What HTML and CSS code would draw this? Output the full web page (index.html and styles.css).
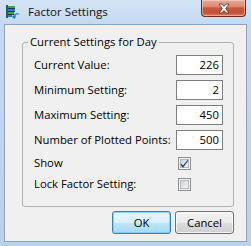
FILE: index.html
```html
<!DOCTYPE html>
<html>
<head>
<meta charset="utf-8">
<link rel="stylesheet" href="styles.css">
</head>
<body>
<div class="window">
  <div class="titlebar">
    <svg class="app-icon" width="16" height="16" viewBox="0 0 16 16">
      <rect x="1" y="1" width="2" height="13" fill="#1f5f5f"/>
      <rect x="3" y="2" width="7" height="2" fill="#3aa84a"/>
      <rect x="3" y="5" width="7" height="2" fill="#2c7fc4"/>
      <rect x="3" y="8" width="6" height="2" fill="#3aa84a"/>
      <rect x="3" y="11" width="4" height="2" fill="#2c7fc4"/>
      <rect x="3" y="4" width="7" height="1" fill="#1d3b4f"/>
      <rect x="3" y="7" width="7" height="1" fill="#1d3b4f"/>
      <rect x="3" y="10" width="6" height="1" fill="#1d3b4f"/>
      <path d="M7 13 L11 9 L15 10 L11 11 L10 15 Z" fill="#1e73c8"/>
      <path d="M9 12 L12 9.5 L11.5 11 Z" fill="#8fd0ff"/>
    </svg>
    <span class="title">Factor Settings</span>
    <div class="close-btn">
      <svg width="14" height="11" viewBox="0 0 14 11">
        <path d="M2 1 H5 L7 3.5 L9 1 H12 L8.7 5.5 L12 10 H9 L7 7.5 L5 10 H2 L5.3 5.5 Z" fill="#ffffff" stroke="#5a2a20" stroke-width="0.8"/>
      </svg>
    </div>
  </div>
  <div class="client">
    <fieldset class="group">
      <legend>Current Settings for Day</legend>
      <div class="rows">
        <label class="lbl">Current Value:</label>
        <div class="field">226</div>
        <label class="lbl">Minimum Setting:</label>
        <div class="field">2</div>
        <label class="lbl">Maximum Setting:</label>
        <div class="field">450</div>
        <label class="lbl">Number of Plotted Points:</label>
        <div class="field">500</div>
        <label class="lbl check-row">Show</label>
        <div class="check-row"><span class="checkbox"><span class="inner">
          <svg width="9" height="9" viewBox="0 0 9 9"><path d="M1 4.5 L3 6.5 L8 0.5 L8 2 L3.2 8.5 L2.6 8.5 L0.5 5.8 Z" fill="#1c3f75"/></svg>
        </span></span></div>
        <label class="lbl check-row">Lock Factor Setting:</label>
        <div class="check-row"><span class="checkbox"><span class="inner"></span></span></div>
      </div>
    </fieldset>
    <div class="buttons">
      <button class="btn default">OK</button>
      <button class="btn">Cancel</button>
    </div>
  </div>
</div>
</body>
</html>
```

FILE: styles.css
```css
html, body {
  margin: 0;
  padding: 0;
  width: 251px;
  height: 246px;
  overflow: hidden;
  background: #bcd3ec;
}

.window {
  width: 251px;
  height: 246px;
  box-sizing: border-box;
  background: linear-gradient(to bottom, #d3e3f5 0px, #c5daf0 24px, #bad1ea 246px);
  display: flex;
  flex-direction: column;
  padding: 0 4px 4px 4px;
  font-family: "Open Sans", "Noto Sans", sans-serif;
  font-size: 11.3px;
  color: #000;
}

.titlebar {
  height: 24px;
  display: flex;
  align-items: center;
  position: relative;
}

.app-icon {
  margin-left: 1px;
}

.title {
  margin-left: 7px;
  font-size: 11.6px;
  color: #111;
  margin-top: -1px;
}

.close-btn {
  position: absolute;
  right: 1px;
  top: 0;
  width: 45px;
  height: 17px;
  box-sizing: border-box;
  border: 1px solid #6d2b22;
  border-top: none;
  border-radius: 0 0 4px 4px;
  background: linear-gradient(to bottom, #e9a99a 0%, #dc8a74 40%, #c7573e 50%, #c45236 80%, #d98065 100%);
  display: flex;
  align-items: center;
  justify-content: center;
  box-shadow: inset 0 0 0 1px rgba(255, 220, 210, 0.5);
}

.client {
  flex: 1;
  background: #f0f0f0;
  border: 1px solid #8aa5c2;
  display: flex;
  flex-direction: column;
  align-items: flex-start;
  padding: 0;
}

.group {
  margin: 9px 0 0 17px;
  width: 212px;
  box-sizing: border-box;
  border: 1px solid #adb2b5;
  border-radius: 3px;
  padding: 5px 10px 14px 11px;
  min-width: 0;
}

.group legend {
  margin-left: -6px;
  padding: 0 2px;
  line-height: 16px;
  font-size: 11.3px;
  color: #000;
}

.rows {
  display: grid;
  grid-template-columns: 1fr 47px;
  row-gap: 5px;
  align-items: center;
}

.lbl {
  line-height: 16px;
  white-space: nowrap;
}

.field {
  height: 20px;
  box-sizing: border-box;
  border: 1px solid #7f7f7f;
  background: #fff;
  text-align: right;
  padding-right: 3px;
  line-height: 18px;
  font-size: 11.3px;
}

.check-row {
  height: 16px;
}

.checkbox {
  display: block;
  margin: 2px 0 0 2px;
  width: 13px;
  height: 13px;
  box-sizing: border-box;
  border: 1px solid #8e8f8f;
  background: #f4f4f4;
  padding: 1px;
}

.checkbox .inner {
  display: flex;
  align-items: center;
  justify-content: center;
  width: 9px;
  height: 9px;
  box-sizing: border-box;
  border: 1px solid #b4b8bd;
  background: linear-gradient(135deg, #cdd1d6 0%, #e6e8ea 60%, #f7f7f7 100%);
}

.checkbox .inner svg {
  flex: none;
  margin: -1px;
}

.buttons {
  align-self: stretch;
  display: flex;
  justify-content: flex-end;
  gap: 4px;
  margin: 4px 0 0 0;
  padding-right: 12px;
}

.btn {
  width: 59px;
  height: 23px;
  box-sizing: border-box;
  border: 1px solid #707070;
  border-radius: 3px;
  background: linear-gradient(to bottom, #f2f2f2 0%, #ebebeb 50%, #dddddd 51%, #cfcfcf 100%);
  box-shadow: inset 0 0 0 1px rgba(255, 255, 255, 0.7);
  font-family: "Open Sans", "Noto Sans", sans-serif;
  font-size: 11.3px;
  color: #000;
  padding: 0;
  line-height: 20px;
}

.btn.default {
  border-color: #3c7fb1;
  background: linear-gradient(to bottom, #eaf6fd 0%, #d9f0fc 50%, #bee6fd 51%, #a7d9f5 100%);
  box-shadow: inset 0 0 0 1px rgba(120, 200, 255, 0.8);
}
```
